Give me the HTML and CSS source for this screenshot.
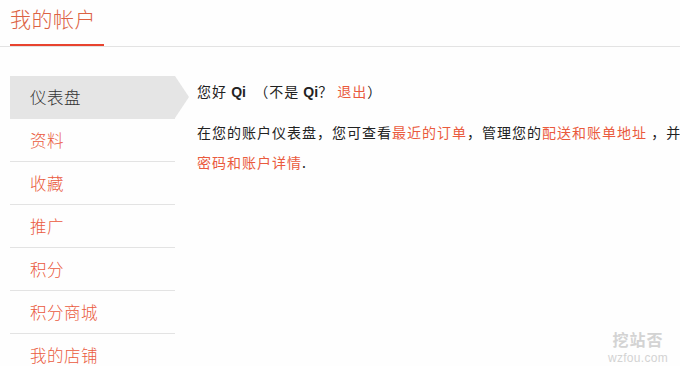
FILE: index.html
```html
<!DOCTYPE html>
<html lang="zh">
<head>
<meta charset="utf-8">
<link rel="stylesheet" href="styles.css">
</head>
<body>
<div class="page">
  <div class="header">
    <h1 class="title">我的帐户</h1>
  </div>
  <div class="layout">
    <ul class="nav">
      <li class="nav-item active"><a>仪表盘</a></li>
      <li class="nav-item"><a>资料</a></li>
      <li class="nav-item"><a>收藏</a></li>
      <li class="nav-item"><a>推广</a></li>
      <li class="nav-item"><a>积分</a></li>
      <li class="nav-item"><a>积分商城</a></li>
      <li class="nav-item"><a>我的店铺</a></li>
    </ul>
    <div class="main">
      <p class="line">您好 <strong>Qi</strong>&nbsp; （不是 <strong>Qi</strong>？ <a class="link">退出</a>）</p>
      <p class="line">在您的账户仪表盘，您可查看<a class="link">最近的订单</a>，管理您的<a class="link">配送和账单地址</a> ，并编辑您的<a class="link">密码和账户详情</a>.</p>
    </div>
  </div>
  <div class="watermark">
    <div class="wm-cn">挖站否</div>
    <div class="wm-en">wzfou.com</div>
  </div>
</div>
</body>
</html>
```
FILE: styles.css
```css
html, body {
  margin: 0;
  padding: 0;
  background: #fefefe;
  overflow: hidden;
}
body {
  font-family: "Noto Sans CJK SC", "Noto Sans", sans-serif;
  color: #333;
}
.page {
  position: relative;
  width: 680px;
  height: 366px;
  overflow: hidden;
}
.header {
  height: 46px;
  border-bottom: 1px solid #e3e3e3;
  padding-left: 10px;
}
.title {
  display: inline-block;
  margin: 0;
  font-size: 21px;
  font-weight: 300;
  line-height: 36px;
  padding: 0 0 8px 0;
  width: 94px;
  color: #dc6243;
  border-bottom: 2px solid #e8432f;
  letter-spacing: 0.5px;
}
.layout {
  display: flex;
  padding-top: 29px;
}
.nav {
  list-style: none;
  margin: 0 0 0 10px;
  padding: 0;
  width: 165px;
  flex: none;
}
.nav-item {
  position: relative;
  height: 42px;
  border-bottom: 1px solid #e3e3e3;
  display: flex;
  align-items: center;
  padding-left: 20px;
  font-size: 16.5px;
  font-weight: 300;
  letter-spacing: 0.5px;
  color: #ea5a3d;
}
.nav-item.active {
  background: #e5e5e5;
  color: #333;
  border-bottom-color: #e5e5e5;
}
.nav-item.active::after {
  content: "";
  position: absolute;
  right: -14px;
  top: 0;
  border-left: 14px solid #e5e5e5;
  border-top: 21px solid transparent;
  border-bottom: 21px solid transparent;
}
.main {
  margin-left: 22px;
  width: 551px;
  flex: none;
  font-size: 14px;
  letter-spacing: 1px;
  color: #222;
}
.line {
  margin: 0 0 10px 0;
  line-height: 30px;
}
.line strong {
  font-family: "Liberation Sans", Arial, sans-serif;
  font-weight: bold;
  letter-spacing: 0;
}
.link {
  color: #ea5a3d;
}
.watermark {
  position: absolute;
  right: 12px;
  top: 329px;
  text-align: center;
  color: #d3d3d3;
}
.wm-cn {
  font-size: 16px;
  font-weight: bold;
  letter-spacing: 1px;
  line-height: 20px;
}
.wm-en {
  font-family: "Liberation Sans", Arial, sans-serif;
  font-size: 12px;
  line-height: 14px;
  margin-top: 2px;
  letter-spacing: 0.3px;
}
```
